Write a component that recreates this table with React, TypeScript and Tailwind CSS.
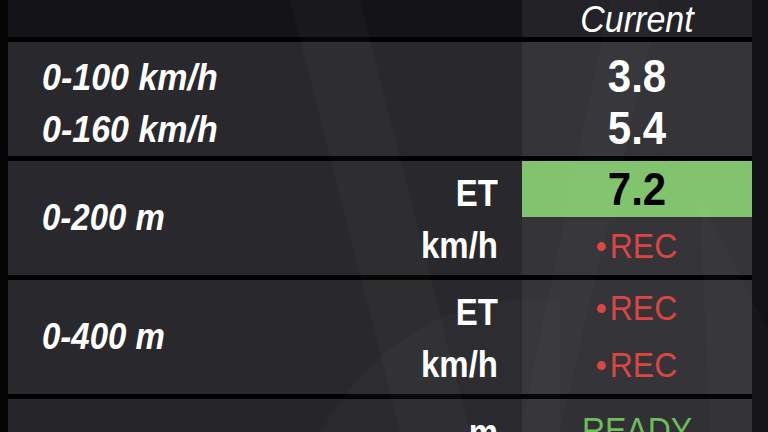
import React from "react";

type SubLine = { unit: string; value: React.ReactNode; highlight?: boolean };

const font = { fontFamily: '"Liberation Sans", Arial, sans-serif' };

function Rec() {
  return (
    <span className="flex scale-y-110 items-center text-[32px] text-[#dc4642]">
      <span className="mr-[4px] inline-block h-[9px] w-[9px] scale-y-90 rounded-full bg-[#dc4642]" />
      REC
    </span>
  );
}

function SplitRow({ label, lines }: { label: string; lines: SubLine[] }) {
  return (
    <div className="flex h-[114px] shrink-0">
      <div className="flex w-[514px] items-center justify-between bg-[#29292d] pl-[34px] pr-[24px]">
        <span className="inline-block scale-y-110 text-[33px] font-bold italic text-white">
          {label}
        </span>
        <div className="flex h-full flex-col items-end">
          {lines.map((l, i) => (
            <div
              key={i}
              className={`flex items-center ${
                i === 0 ? "h-[56px] pt-[10px]" : "h-[58px]"
              }`}
            >
              <span className="inline-block scale-y-110 text-[33px] font-bold text-white">
                {l.unit}
              </span>
            </div>
          ))}
        </div>
      </div>
      <div className="flex w-[230px] flex-col bg-[#343439]">
        {lines.map((l, i) => (
          <div
            key={i}
            className={`flex items-center justify-center ${
              i === 0 ? "h-[56px]" : "h-[58px]"
            } ${l.highlight ? "bg-[#82c46e]" : ""}`}
          >
            {l.value}
          </div>
        ))}
      </div>
    </div>
  );
}

export default function App() {
  return (
    <div
      className="relative flex h-[432px] w-[768px] overflow-hidden bg-black"
      style={font}
    >
      {/* left edge strip */}
      <div className="w-[8px] shrink-0 bg-[#050506]" />

      {/* main table */}
      <div className="flex w-[744px] shrink-0 flex-col gap-[5px]">
        {/* header */}
        <div className="flex h-[37px] shrink-0">
          <div className="w-[514px] bg-[#141418]" />
          <div className="flex w-[230px] items-center justify-center bg-[#222227] pt-[1px]">
            <span className="inline-block scale-y-110 text-[34px] italic leading-none text-white">
              Current
            </span>
          </div>
        </div>

        {/* 0-100 / 0-160 */}
        <div className="flex h-[114px] shrink-0">
          <div className="flex w-[514px] flex-col justify-center gap-[6px] bg-[#29292d] pl-[34px] pt-[8px]">
            <span className="inline-block h-[46px] scale-y-110 text-[34px] font-bold italic leading-[46px] text-white">
              0-100 km/h
            </span>
            <span className="inline-block h-[46px] scale-y-110 text-[34px] font-bold italic leading-[46px] text-white">
              0-160 km/h
            </span>
          </div>
          <div className="flex w-[230px] flex-col justify-center gap-[6px] bg-[#343439] pt-[8px]">
            <span className="inline-block h-[46px] scale-y-110 text-center text-[42px] font-bold leading-[46px] text-white">
              3.8
            </span>
            <span className="inline-block h-[46px] scale-y-110 text-center text-[42px] font-bold leading-[46px] text-white">
              5.4
            </span>
          </div>
        </div>

        <SplitRow
          label="0-200 m"
          lines={[
            {
              unit: "ET",
              value: (
                <span className="inline-block scale-y-110 text-[42px] font-bold text-black">
                  7.2
                </span>
              ),
              highlight: true,
            },
            { unit: "km/h", value: <Rec /> },
          ]}
        />

        <SplitRow
          label="0-400 m"
          lines={[
            { unit: "ET", value: <Rec /> },
            { unit: "km/h", value: <Rec /> },
          ]}
        />

        {/* partially visible row */}
        <div className="flex h-[114px] shrink-0">
          <div className="flex w-[514px] items-start justify-end bg-[#26262a] pr-[24px] pt-[9px]">
            <span className="inline-block scale-y-110 text-[33px] font-bold text-white">m</span>
          </div>
          <div className="flex w-[230px] items-start justify-center bg-[#303035] pt-[7px]">
            <span className="inline-block scale-y-110 text-[32px] text-[#6dbd5b]">READY</span>
          </div>
        </div>
      </div>

      {/* right edge strip */}
      <div className="flex-1 bg-[#121216]" />

      {/* faint diagonal streaks of the background */}
      <svg
        className="pointer-events-none absolute inset-0"
        width="768"
        height="432"
        viewBox="0 0 768 432"
      >
        <polygon points="290,0 360,0 470,432 400,432" fill="white" opacity="0.025" />
        <polygon points="610,0 660,0 560,432 520,432" fill="white" opacity="0.015" />
        <path d="M320 432 C 380 330, 470 290, 560 300 L 560 432 Z" fill="white" opacity="0.02" />
        <polygon points="700,200 768,330 768,432 710,432" fill="white" opacity="0.02" />
      </svg>
    </div>
  );
}
